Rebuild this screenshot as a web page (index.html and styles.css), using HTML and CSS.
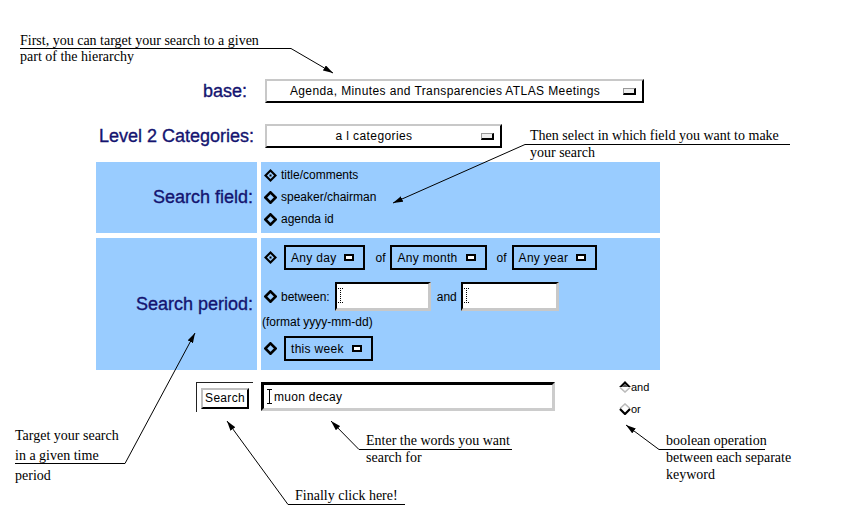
FILE: index.html
```html
<!doctype html>
<html lang="en">
<head>
    <meta charset="utf-8">
    <title>Agenda search help</title>
    <link rel="stylesheet" href="styles.css">
</head>
<body>
<div class="page">
    <form class="search">
        <div class="row row-base">
            <div class="label label-base">base:</div>
            <div class="menu menu-base"><span>Agenda, Minutes and Transparencies ATLAS Meetings</span><i class="ind"></i></div>
        </div>

        <div class="row row-cat">
            <div class="label label-cat">Level 2 Categories:</div>
            <div class="menu menu-cat"><span>a l categories</span><i class="ind"></i></div>
        </div>

        <div class="row row-field">
            <div class="label cell-head">Search field:</div>
            <div class="cell-body field-list">
                <div class="opt"><svg class="radio" viewBox="0 0 13 13"><polygon points="6.5,0 13,6.5 6.5,13 0,6.5" fill="#000"/><polygon points="6.5,3 10,6.5 6.5,10 3,6.5" fill="#99ccff"/><rect x="5.5" y="5.5" width="2" height="2" fill="#000"/></svg>title/comments</div>
                <div class="opt"><svg class="radio" viewBox="0 0 13 13"><polygon points="6.5,1.3 11.7,6.5 6.5,11.7 1.3,6.5" fill="none" stroke="#000" stroke-width="2.6"/></svg>speaker/chairman</div>
                <div class="opt"><svg class="radio" viewBox="0 0 13 13"><polygon points="6.5,1.3 11.7,6.5 6.5,11.7 1.3,6.5" fill="none" stroke="#000" stroke-width="2.6"/></svg>agenda id</div>
            </div>
        </div>

        <div class="row row-period">
            <div class="label cell-head">Search period:</div>
            <div class="cell-body period">
                <div class="line line-dates">
                    <svg class="radio" viewBox="0 0 13 13"><polygon points="6.5,0 13,6.5 6.5,13 0,6.5" fill="#000"/><polygon points="6.5,3 10,6.5 6.5,10 3,6.5" fill="#99ccff"/><rect x="5.5" y="5.5" width="2" height="2" fill="#000"/></svg>
                    <div class="drop">Any day<i class="ind-small"></i></div>
                    <span class="of">of</span>
                    <div class="drop">Any month<i class="ind-small"></i></div>
                    <span class="of">of</span>
                    <div class="drop">Any year<i class="ind-small"></i></div>
                </div>
                <div class="line line-between">
                    <svg class="radio" viewBox="0 0 13 13"><polygon points="6.5,1.3 11.7,6.5 6.5,11.7 1.3,6.5" fill="none" stroke="#000" stroke-width="2.6"/></svg>
                    <span>between:</span>
                    <div class="date date-from"><svg class="caret" viewBox="0 0 5 15"><path d="M0,0.5H5M0,14.5H5M2.5,0V15" stroke="#000" stroke-width="1" stroke-dasharray="1 1"/></svg></div>
                    <span class="and">and</span>
                    <div class="date date-to"><svg class="caret" viewBox="0 0 5 15"><path d="M0,0.5H5M0,14.5H5M2.5,0V15" stroke="#000" stroke-width="1" stroke-dasharray="1 1"/></svg></div>
                </div>
                <div class="format">(format yyyy-mm-dd)</div>
                <div class="line line-week">
                    <svg class="radio" viewBox="0 0 13 13"><polygon points="6.5,1.3 11.7,6.5 6.5,11.7 1.3,6.5" fill="none" stroke="#000" stroke-width="2.6"/></svg>
                    <div class="drop">this week<i class="ind-small"></i></div>
                </div>
            </div>
        </div>

        <div class="row row-go">
            <div class="go-cell">
                <div class="frame"><div class="button">Search</div></div>
            </div>
            <div class="go-body">
                <div class="query"><svg class="caret" viewBox="0 0 5 15"><path d="M0,0.5H5M0,14.5H5M2.5,0V15" stroke="#000" stroke-width="1"/></svg>muon decay</div>
                <div class="bool">
                    <div class="bool-opt"><svg class="radio3d" viewBox="0 0 12 12"><polyline points="1,6.5 6,11 11,6.5" fill="none" stroke="#bbb" stroke-width="1.6"/><polygon points="0,6 6,0 12,6 9,6 6,3 3,6" fill="#000"/><polygon points="3,6 6,3 9,6" fill="#555"/></svg>and</div>
                    <div class="bool-opt"><svg class="radio3d" viewBox="0 0 12 12"><polyline points="1,5.5 6,1 11,5.5" fill="none" stroke="#bbb" stroke-width="1.6"/><polyline points="1,6 6,11 11,6" fill="none" stroke="#000" stroke-width="2.2"/></svg>or</div>
                </div>
            </div>
        </div>
    </form>

    <!-- callouts -->
    <svg class="arrows" width="859" height="519" viewBox="0 0 859 519">
        <defs>
            <marker id="ah" viewBox="0 0 10 6" refX="10" refY="3" markerWidth="10" markerHeight="6" orient="auto" markerUnits="userSpaceOnUse">
                <path d="M0,0 L10,3 L0,6 z"/>
            </marker>
        </defs>
        <polyline points="20,48.5 291,48.5 333,73" marker-end="url(#ah)"/>
        <polyline points="790,144.5 525,144.5 393,203" marker-end="url(#ah)"/>
        <polyline points="15,463.5 125,463.5 195,333" marker-end="url(#ah)"/>
        <polyline points="405,504.5 288,504.5 227,421" marker-end="url(#ah)"/>
        <polyline points="512,449.5 359,449.5 331,421" marker-end="url(#ah)"/>
        <polyline points="765,449.5 659,449.5 626,425" marker-end="url(#ah)"/>
    </svg>

    <div class="note note-base">First, you can target your search to a given<br>part of the hierarchy</div>
    <div class="note note-field">Then select in which field you want to make<br>your search</div>
    <div class="note note-period">Target your search<br>in a given time<br>period</div>
    <div class="note note-click">Finally click here!</div>
    <div class="note note-words">Enter the words you want<br>search for</div>
    <div class="note note-bool">boolean operation<br>between each separate<br>keyword</div>
</div>
</body>
</html>
```

FILE: styles.css
```css
* {
    box-sizing: border-box;
}
body {
    margin: 0;
    background-color: #fff;
    font-family: "Liberation Sans", Arial, sans-serif;
    font-size: 12px;
    color: #000;
}
.page {
    position: relative;
    width: 859px;
    height: 519px;
    overflow: hidden;
}
.search {
    margin: 0 0 0 96px;
    width: 564px;
}
.row {
    display: flex;
    gap: 4px;
}
.label {
    width: 161px;
    flex: none;
    display: flex;
    align-items: center;
    justify-content: flex-end;
    padding-right: 4px;
    font-size: 18px;
    white-space: nowrap;
    color: #141470;
    -webkit-text-stroke: 0.35px #141470;
}
.label-base {
    padding-right: 10px;
}
.label-cat {
    padding-right: 3px;
}
.row-base {
    margin-top: 79px;
    height: 24px;
}
.row-cat {
    margin-top: 21px;
    height: 24px;
}
.menu {
    display: flex;
    align-items: center;
    margin-left: 4px;
    height: 24px;
    border: 2px solid;
    border-color: #c8c8c8 #000 #000 #c8c8c8;
    background-color: #fff;
    padding-right: 6px;
    letter-spacing: 0.4px;
}
.menu span {
    flex: 1;
    text-align: center;
}
.menu-base {
    width: 379px;
}
.menu-cat {
    width: 237px;
}
.ind {
    display: block;
    width: 13px;
    height: 7px;
    border-style: solid;
    border-width: 1px 2px 2px 1px;
    border-color: #999 #000 #000 #999;
    background-color: #eee;
}

/* blue table */
.cell-head {
    background-color: #99ccff;
}
.cell-body {
    width: 399px;
    background-color: #99ccff;
    padding-left: 3px;
}
.row-field {
    margin-top: 14px;
    height: 71px;
}
.row-period {
    margin-top: 5px;
    height: 132px;
}
.field-list {
    padding-top: 2px;
}
.opt {
    display: flex;
    align-items: center;
    height: 22px;
}
.radio {
    width: 13px;
    height: 13px;
    margin-right: 4px;
    flex: none;
}
.period {
    padding-top: 7px;
}
.line {
    display: flex;
    align-items: center;
}
.line-dates .radio,
.line-week .radio {
    margin-right: 7px;
}
.drop {
    display: flex;
    align-items: center;
    height: 25px;
    border: 2px solid #000;
    padding: 0 9px 0 5px;
    letter-spacing: 0.3px;
}
.ind-small {
    display: block;
    width: 10px;
    height: 7px;
    margin-left: 8px;
    border: 2px solid #000;
    background-color: #fff;
}
.of {
    margin: 0 5px 0 10px;
}
.line-between {
    margin-top: 12px;
    height: 29px;
}
.date {
    height: 29px;
    border-style: solid;
    border-width: 2px 3px 3px 2px;
    border-color: #000 #c8c8c8 #c8c8c8 #000;
    background-color: #fff;
    padding: 4px 0 0 1px;
}
.date-from {
    width: 96px;
    margin-left: 5px;
}
.date-to {
    width: 98px;
}
.and {
    margin: 0 4px 0 6px;
}
.caret {
    display: block;
    width: 5px;
    height: 15px;
}
.format {
    margin: 4px 0 0 -2px;
    height: 14px;
    line-height: 14px;
}
.line-week {
    margin-top: 7px;
}

/* search row */
.row-go {
    margin-top: 12px;
    height: 30px;
}
.go-cell {
    width: 161px;
    display: flex;
    justify-content: flex-end;
}
.frame {
    width: 57px;
    height: 30px;
    margin-right: 4px;
    border-top: 1px solid #222;
    border-left: 1px solid #222;
    padding: 5px 0 0 4px;
}
.button {
    width: 48px;
    height: 21px;
    border: 2px solid;
    border-color: #c0c0c0 #000 #000 #c0c0c0;
    font-size: 12px;
    line-height: 17px;
    text-align: center;
    letter-spacing: 0.3px;
}
.go-body {
    display: flex;
}
.query {
    display: flex;
    align-items: center;
    width: 294px;
    height: 29px;
    border: 3px solid;
    border-color: #000 #ccc #ccc #000;
    padding-left: 3px;
    letter-spacing: 0.3px;
}
.query .caret {
    margin-right: 2px;
}
.bool {
    margin: -6px 0 0 64px;
}
.bool-opt {
    display: flex;
    align-items: center;
    height: 22px;
    font-size: 11px;
}
.radio3d {
    width: 12px;
    height: 12px;
}

/* callouts */
.arrows {
    position: absolute;
    left: 0;
    top: 0;
    pointer-events: none;
}
.arrows polyline {
    fill: none;
    stroke: #000;
    stroke-width: 1;
}
.note {
    position: absolute;
    font-family: "Liberation Serif", "Times New Roman", serif;
    font-size: 14px;
    line-height: 17px;
    white-space: nowrap;
}
.note-base {
    left: 20px;
    top: 33px;
    line-height: 16px;
}
.note-field {
    left: 530px;
    top: 127px;
}
.note-period {
    left: 15px;
    top: 426px;
    line-height: 20px;
}
.note-click {
    left: 295px;
    top: 487px;
}
.note-words {
    left: 366px;
    top: 432px;
}
.note-bool {
    left: 666px;
    top: 432px;
}
```
